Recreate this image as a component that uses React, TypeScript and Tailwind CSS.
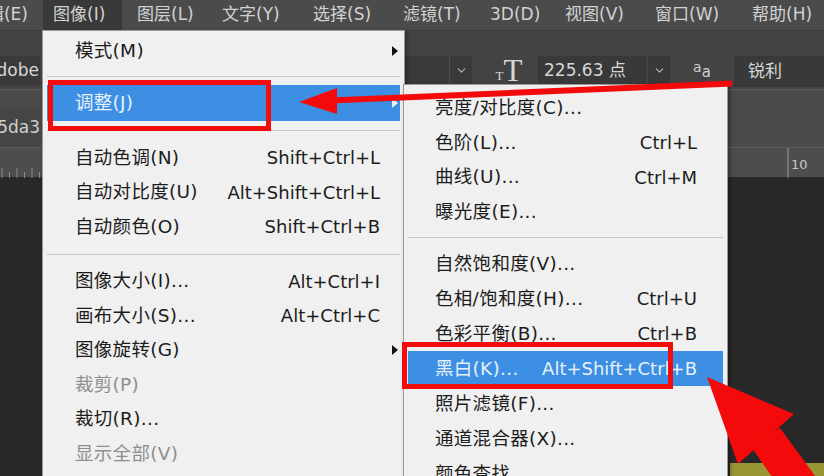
import React from "react";
import { ChevronDown } from "lucide-react";

// --- Fonts ---
const UI_FONT = "font-['DejaVu_Sans','Noto_Sans_CJK_SC',sans-serif]";

// --- Menu bar ---
const TOP_MENU = [
  { label: "编辑(E)", cls: "w-[43px] justify-end pr-[15px]" },
  { label: "图像(I)", cls: "w-[79px] pl-[10px] bg-[#393939]" },
  { label: "图层(L)", cls: "w-[90px] pl-[15px]" },
  { label: "文字(Y)", cls: "w-[91px] pl-[10px]" },
  { label: "选择(S)", cls: "w-[90px] pl-[10px]" },
  { label: "滤镜(T)", cls: "w-[87px] pl-[10px]" },
  { label: "3D(D)", cls: "w-[75px] pl-[10px]" },
  { label: "视图(V)", cls: "w-[90px] pl-[10px]" },
  { label: "窗口(W)", cls: "w-[97px] pl-[10px]" },
  { label: "帮助(H)", cls: "w-[90px] pl-[10px]" },
];

const Arrow: React.FC<{ light?: boolean }> = ({ light }) => (
  <div
    className={`w-0 h-0 border-y-[5px] border-y-transparent border-l-[6px] ${
      light ? "border-l-[#e8f1fb]" : "border-l-[#111]"
    }`}
  />
);

const Row: React.FC<any> = ({ label, shortcut, arrow, active, disabled, h = "h-[34.5px]", sub }) => {
  const tone = active ? "bg-[#3d8fe3] text-[#e6f0fb]" : disabled ? "text-[#8e8e8e]" : "text-[#1c1c1c]";
  return (
    <div className={`flex items-center mx-[4px] ${sub ? "pl-[27px] pr-[26px]" : "pl-[28px]"} ${h} ${tone}`}>
      <span className="flex-1 whitespace-nowrap text-[18.5px] tracking-[0.3px]">{label}</span>
      {shortcut && <span className="whitespace-nowrap">{shortcut}</span>}
      {!sub && (
        <div className="w-[20px] flex justify-end pr-[2px]">{arrow && <Arrow light={active} />}</div>
      )}
    </div>
  );
};

const Sep: React.FC<{ h: string }> = ({ h }) => (
  <div className={`${h} flex items-center`}>
    <div className="mx-[4px] flex-1 h-px bg-[#c6c6c6]" />
  </div>
);

const Ruler = () => (
  <svg width="824" height="30" className="block">
    {Array.from({ length: 84 }).map((_, i) => (
      <line key={i} x1={i * 7.5 + 2} x2={i * 7.5 + 2} y1={i % 2 ? 24 : 20} y2={30} stroke="#8a8a8a" strokeWidth="1" />
    ))}
    <line x1="788" x2="788" y1="0" y2="30" stroke="#9a9a9a" strokeWidth="1" />
    <text x="791" y="21" fontSize="13" fill="#c8c8c8" fontFamily="DejaVu Sans, sans-serif">10</text>
  </svg>
);

export default function App() {
  return (
    <div className={`relative w-[824px] h-[476px] overflow-hidden bg-[#282828] flex flex-col ${UI_FONT}`}>
      {/* menu bar */}
      <div className="flex h-[30px] bg-[#4b4b4b] text-[17px] text-[#d2d2d2] shrink-0">
        {TOP_MENU.map((m) => (
          <div key={m.label} className={`flex items-center h-full whitespace-nowrap shrink-0 ${m.cls}`}>
            {m.label}
          </div>
        ))}
      </div>

      {/* options bar */}
      <div className="flex items-start pt-[25px] h-[60px] bg-[#434343] border-t border-[#3a3a3a] border-b border-b-[#5c5c5c] text-[17px] text-[#d6d6d6] shrink-0">
        <div className="w-[40px] h-[29px] bg-[#3a3a3a] flex items-center justify-end overflow-hidden pr-[1px]">
          <span className="whitespace-nowrap">adobe</span>
        </div>
        <div className="ml-[260px] w-[172px] h-[29px] bg-[#3a3a3a] flex justify-end">
          <div className="w-[23px] border-l border-[#4e4e4e] flex items-center justify-center">
            <ChevronDown size={13} color="#b5b5b5" />
          </div>
        </div>
        <div className="ml-[20px] w-[34px] h-[29px] flex items-end justify-center text-[#d8d8d8] font-['Liberation_Serif',serif] leading-none">
          <span className="text-[13px] mb-[3px]">T</span>
          <span className="text-[31px] -mb-[1px]">T</span>
        </div>
        <div className="ml-[12px] w-[108px] h-[29px] bg-[#393939] flex items-center pl-[6px] whitespace-nowrap">
          225.63 点
        </div>
        <div className="ml-[2px] w-[22px] h-[29px] bg-[#393939] flex items-center justify-center">
          <ChevronDown size={13} color="#b5b5b5" />
        </div>
        <div className="ml-[18px] w-[28px] h-[29px] flex items-center justify-center text-[#cfcfcf] leading-none">
          <span className="text-[14px] -translate-y-[4px]">a</span>
          <span className="text-[15px] translate-y-[2px]">a</span>
        </div>
        <div className="ml-[18px] flex-1 h-[31px] bg-[#393939] flex items-center pl-[14px]">锐利</div>
      </div>

      {/* document tabs */}
      <div className="h-[57px] bg-[#4a4a4a] flex items-end shrink-0">
        <div className="w-[40px] h-[38px] bg-[#454545] flex items-center justify-end overflow-hidden text-[17px] text-[#d0d0d0]">
          <span className="whitespace-nowrap">25da3</span>
        </div>
      </div>

      {/* ruler */}
      <div className="h-[30px] bg-[#4d4d4d] border-t border-[#5a5a5a] shrink-0">
        <Ruler />
      </div>

      {/* canvas */}
      <div className="flex-1 flex flex-col justify-end">
        <div className="self-end w-[94px] h-[13px] bg-[#9a9636]" />
      </div>

      {/* 图像 menu */}
      <div className="absolute left-[42px] top-[30px] w-[363px] h-[460px] bg-[#f0f0f0] border border-[#9a9a9a] pt-[3px] text-[18px] shadow-[2px_2px_4px_rgba(0,0,0,0.4)]">
        <Row label="模式(M)" arrow />
        <Sep h="h-[16px]" />
        <Row label="调整(J)" arrow active h="h-[36px]" />
        <Sep h="h-[20px]" />
        <Row label="自动色调(N)" shortcut="Shift+Ctrl+L" />
        <Row label="自动对比度(U)" shortcut="Alt+Shift+Ctrl+L" />
        <Row label="自动颜色(O)" shortcut="Shift+Ctrl+B" />
        <Sep h="h-[20px]" />
        <Row label="图像大小(I)..." shortcut="Alt+Ctrl+I" />
        <Row label="画布大小(S)..." shortcut="Alt+Ctrl+C" />
        <Row label="图像旋转(G)" arrow />
        <Row label="裁剪(P)" disabled />
        <Row label="裁切(R)..." />
        <Row label="显示全部(V)" disabled />
      </div>

      {/* 调整 submenu */}
      <div className="absolute left-[403px] top-[84px] w-[325px] h-[420px] bg-[#f0f0f0] border border-[#9a9a9a] pt-[6px] text-[18px] shadow-[2px_2px_4px_rgba(0,0,0,0.4)]">
        <Row sub label="亮度/对比度(C)..." />
        <Row sub label="色阶(L)..." shortcut="Ctrl+L" />
        <Row sub label="曲线(U)..." shortcut="Ctrl+M" />
        <Row sub label="曝光度(E)..." />
        <Sep h="h-[17px]" />
        <Row sub h="h-[35px]" label="自然饱和度(V)..." />
        <Row sub h="h-[35px]" label="色相/饱和度(H)..." shortcut="Ctrl+U" />
        <Row sub h="h-[35px]" label="色彩平衡(B)..." shortcut="Ctrl+B" />
        <Row sub h="h-[35px]" label="黑白(K)..." shortcut="Alt+Shift+Ctrl+B" active />
        <Row sub h="h-[35px]" label="照片滤镜(F)..." />
        <Row sub h="h-[35px]" label="通道混合器(X)..." />
        <Row sub h="h-[35px]" label="颜色查找..." />
      </div>

      {/* annotation boxes */}
      <div className="absolute left-[48px] top-[80px] w-[223px] h-[51px] border-[5px] border-[#f20c0c]" />
      <div className="absolute left-[402px] top-[342px] w-[271px] h-[47px] border-[5px] border-[#f20c0c]" />

      {/* annotation arrows */}
      <svg className="absolute inset-0 pointer-events-none" width="824" height="476">
        <line x1="330" y1="100.5" x2="732" y2="83.5" stroke="#f40a0a" strokeWidth="6" />
        <polygon points="299,102 337,88 337,114" fill="#f40a0a" />
        <polygon points="707,377 794,414 738,464" fill="#f40a0a" />
        <polygon points="750,445 780,428 840,510 805,525" fill="#f40a0a" />
      </svg>
    </div>
  );
}
